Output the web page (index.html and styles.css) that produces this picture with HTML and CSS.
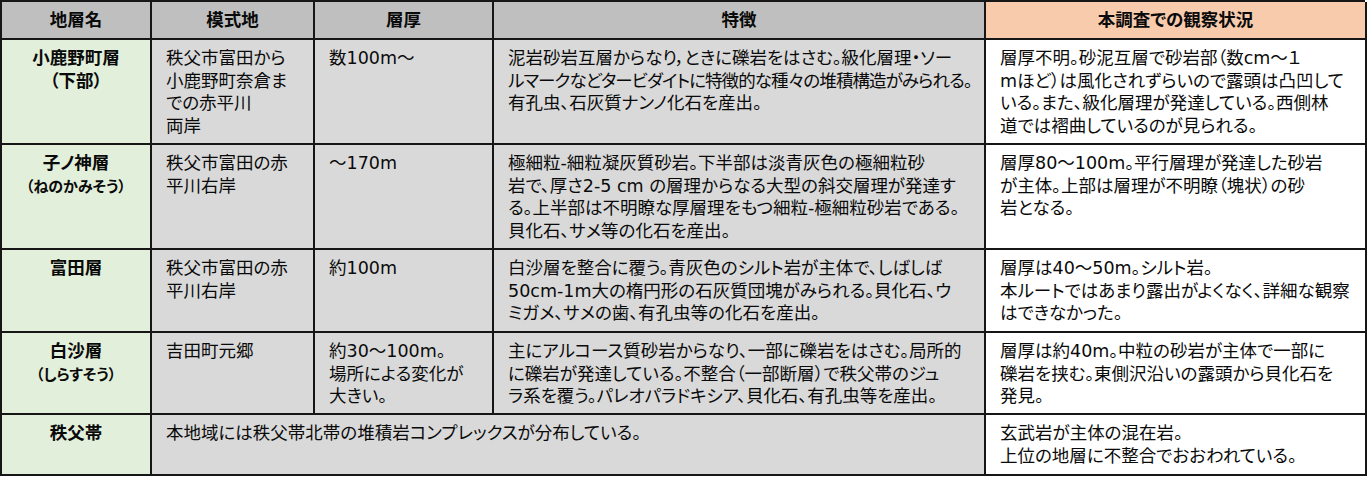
FILE: index.html
```html
<!DOCTYPE html>
<html lang="ja">
<head>
<meta charset="utf-8">
<title>地層一覧</title>
<link rel="stylesheet" href="styles.css">
</head>
<body>
<div class="sheet" role="table">
  <div class="cell head" role="columnheader">地層名</div>
  <div class="cell head" role="columnheader">模式地</div>
  <div class="cell head" role="columnheader">層厚</div>
  <div class="cell head" role="columnheader">特徴</div>
  <div class="cell head obs-head" role="columnheader">本調査での観察状況</div>

  <div class="cell name">小鹿野町層<br>（下部）</div>
  <div class="cell gray">秩父市富田から<br>小鹿野町奈倉ま<br>での赤平川<br>両岸</div>
  <div class="cell gray">数100m～</div>
  <div class="cell gray">泥岩砂岩互層からなり，ときに礫岩をはさむ。級化層理・ソー<br><span class="tight">ルマークなどタービダイトに特徴的な種々の堆積構造がみられる。</span><br>有孔虫、石灰質ナンノ化石を産出。</div>
  <div class="cell obs">層厚不明。砂泥互層で砂岩部（数cm～１<br>mほど）は風化されずらいので露頭は凸凹して<br>いる。また、級化層理が発達している。西側林<br>道では褶曲しているのが見られる。</div>

  <div class="cell name">子ノ神層<br><span class="yomi">（ねのかみそう）</span></div>
  <div class="cell gray">秩父市富田の赤<br>平川右岸</div>
  <div class="cell gray">～170m</div>
  <div class="cell gray">極細粒-細粒凝灰質砂岩。下半部は淡青灰色の極細粒砂<br>岩で、厚さ2-5 cm の層理からなる大型の斜交層理が発達す<br>る。上半部は不明瞭な厚層理をもつ細粒-極細粒砂岩である。<br>貝化石、サメ等の化石を産出。</div>
  <div class="cell obs">層厚80～100m。平行層理が発達した砂岩<br>が主体。上部は層理が不明瞭（塊状）の砂<br>岩となる。</div>

  <div class="cell name">富田層</div>
  <div class="cell gray">秩父市富田の赤<br>平川右岸</div>
  <div class="cell gray">約100m</div>
  <div class="cell gray">白沙層を整合に覆う。青灰色のシルト岩が主体で、しばしば<br>50cm-1m大の楕円形の石灰質団塊がみられる。貝化石、ウ<br>ミガメ、サメの歯、有孔虫等の化石を産出。</div>
  <div class="cell obs">層厚は40～50m。シルト岩。<br>本ルートではあまり露出がよくなく、詳細な観察<br>はできなかった。</div>

  <div class="cell name">白沙層<br><span class="yomi">（しらすそう）</span></div>
  <div class="cell gray">吉田町元郷</div>
  <div class="cell gray">約30～100m。<br>場所による変化が<br>大きい。</div>
  <div class="cell gray">主にアルコース質砂岩からなり、一部に礫岩をはさむ。局所的<br>に礫岩が発達している。不整合（一部断層）で秩父帯のジュ<br>ラ系を覆う。パレオパラドキシア、貝化石、有孔虫等を産出。</div>
  <div class="cell obs">層厚は約40m。中粒の砂岩が主体で一部に<br>礫岩を挟む。東側沢沿いの露頭から貝化石を<br>発見。</div>

  <div class="cell name">秩父帯</div>
  <div class="cell gray span3">本地域には秩父帯北帯の堆積岩コンプレックスが分布している。</div>
  <div class="cell obs">玄武岩が主体の混在岩。<br>上位の地層に不整合でおおわれている。</div>
</div>
</body>
</html>
```

FILE: styles.css
```css
* {
  box-sizing: border-box;
}

html, body {
  margin: 0;
  padding: 0;
  background: #ffffff;
}

body {
  font-family: "DejaVu Sans", "Noto Sans CJK JP", sans-serif;
  font-size: 17.5px;
  line-height: 22.6px;
  color: #0a0a0a;
  font-feature-settings: "palt";
}

.sheet {
  display: grid;
  grid-template-columns: 150px 163px 179px 492px 381px;
  grid-template-rows: 38px 105px 105px 83px 82px 61px;
  width: 1365px;
  border-left: 2px solid #161616;
  border-top: 2px solid #161616;
}

.cell {
  border-right: 2px solid #161616;
  border-bottom: 2px solid #161616;
  padding: 7px 0 0 14px;
  overflow: hidden;
  white-space: nowrap;
}

.tight {
  letter-spacing: -0.9px;
}

.head {
  display: flex;
  align-items: center;
  justify-content: center;
  padding: 0 0 1px 0;
  background: #bfbfbf;
  font-weight: bold;
  font-family: "Noto Sans CJK JP", sans-serif;
}

.obs-head {
  background: #f8cbad;
}

.name {
  background: #e2efda;
  text-align: center;
  font-weight: bold;
  padding: 7px 0 0 0;
}

.yomi {
  font-size: 15px;
}

.gray {
  background: #d9d9d9;
}

.span3 {
  grid-column: 2 / 5;
}

.obs {
  background: #ffffff;
}
```
